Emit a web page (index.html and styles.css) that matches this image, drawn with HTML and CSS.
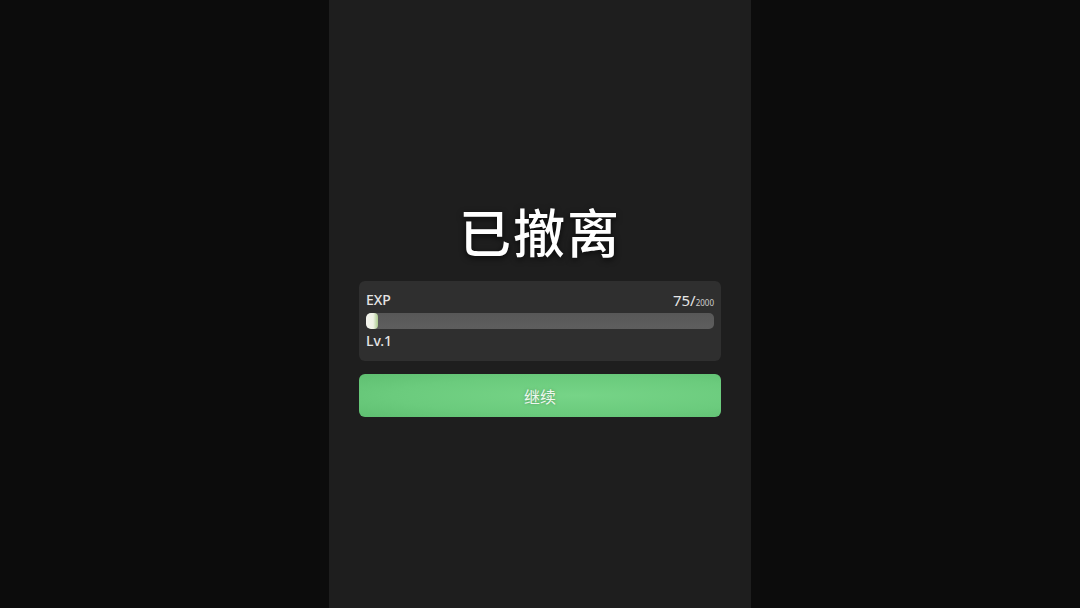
FILE: index.html
```html
<!DOCTYPE html>
<html lang="zh-CN">
<head>
<meta charset="utf-8">
<title>已撤离</title>
<link rel="stylesheet" href="styles.css">
</head>
<body>
<div class="stage">
  <main class="panel">
    <h1 class="title">已撤离</h1>
    <section class="card">
      <div class="row">
        <span class="label">EXP</span>
        <span class="value">75/<small class="max">2000</small></span>
      </div>
      <div class="track"><div class="fill" style="width:12px"></div></div>
      <div class="row">
        <span class="label">Lv.1</span>
      </div>
    </section>
    <button class="continue">继续</button>
  </main>
</div>
</body>
</html>
```

FILE: styles.css
```css
html, body {
  margin: 0;
  padding: 0;
  height: 100%;
}
body {
  background: #0c0c0c;
  font-family: "Noto Sans", "Noto Sans CJK SC", sans-serif;
  color: #e6e6e6;
}
.stage {
  display: flex;
  justify-content: center;
  height: 100%;
}
.panel {
  width: 422px;
  background: #1e1e1e;
  display: flex;
  flex-direction: column;
  align-items: center;
  padding-top: 200px;
  box-sizing: border-box;
}
.title {
  margin: 0;
  font-family: "Noto Sans CJK SC", sans-serif;
  font-size: 52px;
  font-weight: 500;
  line-height: 62px;
  color: #ffffff;
  letter-spacing: 2px;
  text-shadow: 0 2px 6px rgba(0,0,0,0.7);
}
.card {
  margin-top: 19px;
  width: 362px;
  box-sizing: border-box;
  background: #2f2f2f;
  border-radius: 6px;
  padding: 8px 7px 10px 7px;
}
.row {
  display: flex;
  justify-content: space-between;
  align-items: center;
  height: 21px;
}
.label {
  font-size: 14px;
  font-weight: 500;
  color: #e4e4e4;
}
.value {
  font-size: 15px;
  color: #e6e6e6;
}
.max {
  font-size: 8px;
  color: #d0d0d0;
}
.track {
  margin-top: 3px;
  margin-bottom: 1px;
  height: 16px;
  border-radius: 5px;
  background: linear-gradient(#585858, #5e5e5e);
  overflow: hidden;
}
.fill {
  height: 100%;
  border-radius: 4px;
  background: linear-gradient(90deg, #f4f4ee 0%, #eef2e4 60%, #a9c98c 100%);
}
.continue {
  margin-top: 13px;
  width: 362px;
  height: 43px;
  border: none;
  border-radius: 6px;
  background: radial-gradient(ellipse at 60% 50%, #76d487 0%, #6bcb7d 60%, #5fbf71 100%);
  color: #eef7ef;
  font-family: "Noto Sans CJK SC", sans-serif;
  font-size: 16px;
  text-shadow: 0 0 3px rgba(60,120,70,0.6);
}
```
